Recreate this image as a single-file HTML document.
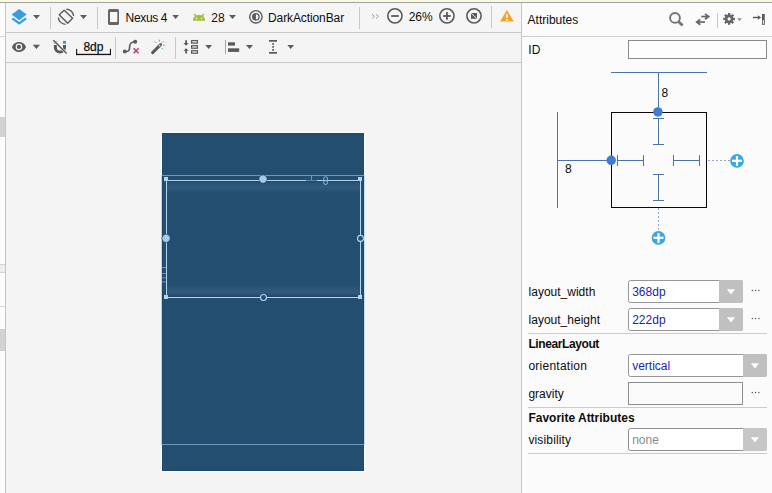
<!DOCTYPE html>
<html><head><meta charset="utf-8">
<style>
*{margin:0;padding:0;box-sizing:border-box}
html,body{width:772px;height:493px;overflow:hidden;background:#f4f4f4;font-family:"Liberation Sans",sans-serif;color:#1a1a1a}
.a{position:absolute}
.t{position:absolute;white-space:nowrap;font-size:12px;line-height:14px}
.sep{position:absolute;width:1px;background:#cdcdcd}
.hl{position:absolute;height:1px;background:#cacaca}
.arr{position:absolute;width:0;height:0;border-left:3.5px solid transparent;border-right:3.5px solid transparent;border-top:4px solid #555}
</style></head><body>
<!-- top strip -->
<div class="a" style="left:0;top:0;width:772px;height:2px;background:#f9f9e0"></div>
<div class="a" style="left:0;top:2px;width:772px;height:1px;background:#a2a2a2"></div>

<!-- left panel -->
<div class="a" style="left:0;top:3px;width:5px;height:490px;background:#fcfcfc"></div>
<div class="a" style="left:5px;top:3px;width:1px;height:490px;background:#c6c6c6"></div>
<div class="a" style="left:0;top:36px;width:5px;height:1px;background:#d6d6d6"></div>
<div class="a" style="left:0;top:117px;width:5px;height:20px;background:#d2d2d2"></div>
<div class="a" style="left:0;top:264px;width:5px;height:9px;background:#eeeeee;border-top:1px solid #d4d4d4;border-bottom:1px solid #d4d4d4"></div>
<div class="a" style="left:0;top:306px;width:5px;height:1px;background:#d6d6d6"></div>
<div class="a" style="left:0;top:329px;width:5px;height:22px;background:#d2d2d2"></div>

<!-- toolbar -->
<div class="a" style="left:6px;top:3px;width:515px;height:29px;background:#f5f5f5"></div>
<div class="a" style="left:6px;top:32px;width:515px;height:1px;background:#c9c9c9"></div>
<div class="a" style="left:6px;top:33px;width:515px;height:29px;background:#f4f4f4"></div>
<div class="a" style="left:6px;top:62px;width:515px;height:1px;background:#c9c9c9"></div>

<!-- canvas -->
<div class="a" style="left:6px;top:63px;width:515px;height:430px;background:#f4f4f4"></div>

<!-- right panel -->
<div class="a" style="left:521px;top:3px;width:1px;height:490px;background:#c6c6c6"></div>
<div class="a" style="left:522px;top:3px;width:250px;height:490px;background:#fbfbfb"></div>
<div class="a" style="left:522px;top:36px;width:250px;height:1px;background:#cfcfcf"></div>


<!-- device -->
<div class="a" style="left:161px;top:132px;width:204px;height:340px;background:#fafcfe"></div>
<div class="a" style="left:162px;top:133px;width:202px;height:338px;background:#234e70;border:1px solid #20486a"></div>
<div class="a" style="left:167px;top:181px;width:193px;height:12px;background:linear-gradient(#213f5c,#2a5172 12%,#2e5a7d 45%,#2b5678 75%,#234e70)"></div>
<div class="a" style="left:167px;top:285px;width:193px;height:12px;background:linear-gradient(#234e70,#2b5678 30%,#2f5b7e 65%,#27486a 92%,#213f5c)"></div>
<svg class="a" style="left:0;top:0" width="772" height="493" viewBox="0 0 772 493">
 <!-- linear layout outline -->
 <g fill="#6c98c0">
  <rect x="162" y="175" width="202" height="1"/>
  <rect x="162" y="444" width="202" height="1"/>
 </g>
 <rect x="161" y="175" width="1" height="270" fill="#b8d2ea"/>
 <rect x="364" y="175" width="1" height="270" fill="#c4dcf0"/>
 <!-- selection -->
 <g fill="#b2d4f0">
  <rect x="166" y="180" width="195" height="1"/>
  <rect x="166" y="297" width="195" height="1"/>
  <rect x="166" y="180" width="1" height="118"/>
  <rect x="360" y="180" width="1" height="118"/>
  <rect x="164" y="177" width="4" height="4"/>
  <rect x="358" y="177" width="4" height="4"/>
  <rect x="164" y="295" width="4" height="4"/>
  <rect x="358" y="295" width="4" height="4"/>
 </g>
 <!-- top tick and chain -->
 <rect x="306" y="180" width="11" height="1" fill="#5a86ab"/>
 <rect x="311" y="175" width="1" height="5" fill="#6c98c0"/>
 <g fill="none" stroke="#8fb6da" stroke-width="1">
  <rect x="323.6" y="176.8" width="4" height="4" rx="2"/>
  <rect x="323.6" y="180.5" width="4" height="4" rx="2"/>
 </g>
 <g fill="#6a94ba">
  <rect x="162" y="267" width="4" height="1"/>
  <rect x="162" y="273" width="4" height="1"/>
  <rect x="162" y="277.3" width="4" height="1"/>
  <rect x="162" y="281.5" width="4" height="1"/>
 </g>
 <g fill="none" stroke="#b2d4f0" stroke-width="1.1">
  <circle cx="263.5" cy="297.5" r="3.0" fill="#234e70"/>
  <circle cx="360.5" cy="238.4" r="3.0" fill="#234e70"/>
 </g>
 <g fill="#a9cae6" stroke="#1d4261" stroke-width="0.6">
  <path d="M263,174.8 L265.6,175.9 A4.1,4.1 0 1 1 260.4,175.9 Z"/>
  <path d="M161.8,238.3 L162.9,235.7 A4.1,4.1 0 1 1 162.9,240.9 Z"/>
 </g>
</svg>


<svg class="a" style="left:0;top:0" width="772" height="493" viewBox="0 0 772 493">
 <!-- ID box -->
 <rect x="628.5" y="40.5" width="138" height="18" fill="#fdfdfd" stroke="#8a8a8a" stroke-width="1"/>
 <!-- constraint widget -->
 <g fill="#4b74ad">
  <rect x="611" y="72" width="96" height="1"/>
  <rect x="658" y="72" width="1" height="40"/>
  <rect x="557" y="112" width="1" height="96"/>
  <rect x="557" y="160" width="54" height="1"/>
  <rect x="658" y="118" width="1" height="27"/>
  <rect x="653" y="118" width="11" height="1"/>
  <rect x="653" y="144" width="11" height="1"/>
  <rect x="658" y="174" width="1" height="27"/>
  <rect x="653" y="174" width="11" height="1"/>
  <rect x="653" y="200" width="11" height="1"/>
  <rect x="617" y="160" width="27" height="1"/>
  <rect x="617" y="155" width="1" height="11"/>
  <rect x="643" y="155" width="1" height="11"/>
  <rect x="673" y="160" width="27" height="1"/>
  <rect x="673" y="155" width="1" height="11"/>
  <rect x="699" y="155" width="1" height="11"/>
 </g>
 <rect x="611.5" y="112.5" width="95" height="95" fill="none" stroke="#0a0a0a" stroke-width="1"/>
 <g stroke="#98a6c0" stroke-width="1" stroke-dasharray="2,2" fill="none">
  <path d="M708,160.5 H730"/>
  <path d="M658.5,208 V231"/>
 </g>
 <circle cx="657.9" cy="111.9" r="4.75" fill="#3d7dd8"/>
 <circle cx="611.2" cy="160.3" r="4.75" fill="#3d7dd8"/>
 <g>
  <circle cx="737" cy="160.9" r="6.8" fill="#3aa6e4"/>
  <rect x="732" y="159.7" width="10" height="2.2" fill="#fff"/>
  <rect x="735.9" y="156.1" width="2.2" height="9.8" fill="#fff"/>
  <circle cx="658.5" cy="237.9" r="6.8" fill="#3aa6e4"/>
  <rect x="653.5" y="236.7" width="10" height="2.2" fill="#fff"/>
  <rect x="657.4" y="233.1" width="2.2" height="9.8" fill="#fff"/>
 </g>
 <g font-family="Liberation Sans" font-size="12" fill="#0a0a0a">
  <text x="661.6" y="96.9">8</text>
  <text x="564.9" y="173.1">8</text>
 </g>
 <!-- dropdowns -->
 <g>
<rect x="628.5" y="280.5" width="114" height="22" rx="2" fill="#fff" stroke="#969696"/><path d="M719,280 H741 Q743,280 743,282 V301 Q743,303 741,303 H719 Z" fill="#c0c0c0"/><polygon points="726.9,289.2 735.1,289.2 731.0,294.4" fill="#fff"/>
<rect x="628.5" y="308.5" width="114" height="22" rx="2" fill="#fff" stroke="#969696"/><path d="M719,308 H741 Q743,308 743,310 V329 Q743,331 741,331 H719 Z" fill="#c0c0c0"/><polygon points="726.9,317.2 735.1,317.2 731.0,322.4" fill="#fff"/>
<rect x="628.5" y="354.5" width="138" height="22" rx="2" fill="#fff" stroke="#969696"/><path d="M743,354 H765 Q767,354 767,356 V375 Q767,377 765,377 H743 Z" fill="#c0c0c0"/><polygon points="750.9,363.2 759.1,363.2 755.0,368.4" fill="#fff"/>
 <rect x="628.5" y="382.5" width="114" height="22" fill="#fbfbfb" stroke="#8f8f8f"/>
<rect x="628.5" y="428.5" width="138" height="22" rx="2" fill="#fff" stroke="#8e8e8e"/><path d="M743,428 H765 Q767,428 767,430 V449 Q767,451 765,451 H743 Z" fill="#c6c6c6"/><polygon points="750.9,437.2 759.1,437.2 755.0,442.4" fill="#fff"/>
 </g>
 <g fill="#444">
  <circle cx="752.3" cy="290.5" r="0.65"/>
  <circle cx="755.6" cy="290.5" r="0.65"/>
  <circle cx="758.9" cy="290.5" r="0.65"/>
  <circle cx="752.3" cy="318.5" r="0.65"/>
  <circle cx="755.6" cy="318.5" r="0.65"/>
  <circle cx="758.9" cy="318.5" r="0.65"/>
  <circle cx="752.3" cy="392.5" r="0.65"/>
  <circle cx="755.6" cy="392.5" r="0.65"/>
  <circle cx="758.9" cy="392.5" r="0.65"/>
 </g>
 <g fill="#cbcbcb">
  <rect x="528" y="333" width="239" height="1"/>
  <rect x="528" y="407" width="239" height="1"/>
  <rect x="528" y="453" width="239" height="1"/>
 </g>
 <g font-family="Liberation Sans" font-size="12" fill="#0e0e0e">
  <text x="528.3" y="53.6">ID</text>
  <text x="528.6" y="296">layout_width</text>
  <text x="528.6" y="324">layout_height</text>
  <text x="528.4" y="348" font-weight="bold" letter-spacing="-0.4">LinearLayout</text>
  <text x="528.4" y="370" letter-spacing="0.25">orientation</text>
  <text x="528.4" y="398">gravity</text>
  <text x="528.4" y="422" font-weight="bold">Favorite Attributes</text>
  <text x="528.4" y="444" letter-spacing="0.15">visibility</text>
 </g>
 <g font-family="Liberation Sans" font-size="12" fill="#2424a8">
  <text x="632.2" y="296">368dp</text>
  <text x="632.2" y="324">222dp</text>
  <text x="632.2" y="370">vertical</text>
 </g>
 <text x="632.2" y="444" font-family="Liberation Sans" font-size="12" fill="#8a8a8a">none</text>
</svg>

<div id="content"></div>

<svg class="a" style="left:0;top:0" width="772" height="63" viewBox="0 0 772 63">
 <g fill="#5a5a5a">
  <!-- layers -->
  <polygon points="11.7,14.6 19.2,9 26.6,14.6 19.2,20.2" fill="#389ce0"/>
  <polyline points="12.3,18.3 19.2,23.4 26.1,18.3" fill="none" stroke="#389ce0" stroke-width="2.3"/>
  <polygon points="33,15 40,15 36.5,19"/>
  <!-- rotate -->
  <polygon points="59.2,14.7 64.2,10.2 72.6,18.3 67.7,23.2" fill="none" stroke="#555" stroke-width="1.3" stroke-linejoin="round"/>
  <path d="M66.2,9.1 A7.7,7.7 0 0 1 73.6,15.8" fill="none" stroke="#555" stroke-width="1.3"/>
  <path d="M58.3,17.6 A7.7,7.7 0 0 0 65.7,24.4" fill="none" stroke="#555" stroke-width="1.3"/>
  <polygon points="80,15 87,15 83.5,19"/>
  <!-- phone -->
  <rect x="108" y="9" width="11" height="16" rx="1.6" fill="#666"/>
  <rect x="110" y="12" width="7.3" height="10" fill="#f8f8f8"/>
  <polygon points="172.3,15 178.9,15 175.6,18.9" fill="#5a5a5a"/>
  <!-- android -->
  <path d="M192.9,20.7 L193.2,18.6 Q194.4,15.1 199,15.1 Q203.6,15.1 204.8,18.6 L205.1,20.7 Z" fill="#9cc134"/>
  <path d="M194.2,14 L196.6,16.7 M203.8,14 L201.4,16.7" stroke="#9cc134" stroke-width="1.4"/>
  <circle cx="196.5" cy="18.4" r="0.85" fill="#e9f6b4"/><circle cx="201.5" cy="18.4" r="0.85" fill="#e9f6b4"/>
  <polygon points="229,15 236,15 232.5,19"/>
  <!-- theme -->
  <circle cx="255.9" cy="16.8" r="6.2" fill="none" stroke="#5a5a5a" stroke-width="1.4"/>
  <circle cx="255.9" cy="16.8" r="3.2" fill="none" stroke="#5a5a5a" stroke-width="1.3"/>
  <path d="M255.9,13.6 A3.2,3.2 0 0 0 255.9,20 Z" fill="#5a5a5a"/>
  <!-- >> -->
  <path d="M372.2,14.3 L374.4,16.4 L372.2,18.5 M376.2,14.3 L378.4,16.4 L376.2,18.5" fill="none" stroke="#8a8a8a" stroke-width="0.9"/>
  <!-- zoom out -->
  <circle cx="394.9" cy="15.9" r="7.1" fill="none" stroke="#5a5a5a" stroke-width="1.6"/>
  <rect x="391.1" y="15.1" width="7.7" height="1.8"/>
  <!-- zoom in -->
  <circle cx="446.9" cy="15.9" r="7.1" fill="none" stroke="#5a5a5a" stroke-width="1.6"/>
  <rect x="443.1" y="15.1" width="7.7" height="1.8"/>
  <rect x="446.05" y="12.1" width="1.8" height="7.7"/>
  <!-- fit -->
  <circle cx="474" cy="15.9" r="7.1" fill="none" stroke="#5a5a5a" stroke-width="1.6"/>
  <rect x="471" y="13" width="6" height="5.8"/>
  <line x1="471.2" y1="13.2" x2="476.8" y2="18.6" stroke="#f5f5f5" stroke-width="0.9"/>
  <!-- warning -->
  <polygon points="506.9,10.1 513.8,21.6 500.1,21.6" fill="#f2a328"/>
  <rect x="505.9" y="14.1" width="2" height="3.9" fill="#fff3c4"/>
  <rect x="505.9" y="19" width="2" height="1.7" fill="#fff3c4"/>
 </g>
 <!-- separators row1 -->
 <g fill="#c8c8c8">
  <rect x="50" y="7" width="1" height="22"/>
  <rect x="97" y="7" width="1" height="22"/>
  <rect x="359" y="7" width="1" height="22"/>
  <rect x="491" y="6" width="1" height="22"/>
 </g>
 <!-- row 2 -->
 <g fill="#5a5a5a">
  <!-- eye -->
  <path d="M11.9,46.9 C14.6,40.2 23.4,40.2 26.1,46.9 C23.4,53.6 14.6,53.6 11.9,46.9 Z" fill="#5a5a5a"/>
  <circle cx="18.95" cy="46.9" r="3.3" fill="#f4f4f4"/>
  <circle cx="18.95" cy="46.9" r="2.1" fill="#5a5a5a"/>
  <polygon points="32.8,44.7 40,44.7 36.4,49"/>
  <!-- magnet -->
  <path d="M53.85,45.1 V47.5 A6.07,6.07 0 0 0 66,47.5 V45.1 H63 V47.5 A3.07,3.07 0 0 1 56.85,47.5 V45.1 Z" fill="#585858"/>
  <rect x="63" y="40.9" width="3" height="2.8" fill="#3a95d0"/>
  <rect x="53.85" y="40.9" width="3" height="2.8" fill="#3a95d0"/>
  <line x1="53" y1="39.8" x2="67" y2="53.8" stroke="#f4f4f4" stroke-width="2.6"/>
  <line x1="53.4" y1="40.2" x2="66.6" y2="53.4" stroke="#555" stroke-width="1.4"/>
  <!-- 8dp bracket -->
  <rect x="76.1" y="53.8" width="34.9" height="1.3" fill="#111"/>
  <rect x="76.1" y="48.9" width="1.1" height="6.2" fill="#111"/>
  <rect x="109.9" y="48.9" width="1.1" height="6.2" fill="#111"/>
  <!-- clear constraints -->
  <path d="M124.8,51.6 C128.6,51.8 129.5,50.6 129.6,47 C129.7,43.2 131,41.8 135.2,41.8" fill="none" stroke="#5c5c5c" stroke-width="1.7"/>
  <circle cx="124.8" cy="51.6" r="2" fill="#5c5c5c"/>
  <circle cx="135.2" cy="41.8" r="2" fill="#5c5c5c"/>
  <path d="M133.6,48.2 L138.6,53.2 M138.6,48.2 L133.6,53.2" stroke="#c23c5c" stroke-width="1.5"/>
  <!-- wand -->
  <line x1="152.6" y1="52.6" x2="160.6" y2="44.6" stroke="#5a5a5a" stroke-width="2.9" stroke-linecap="round"/>
  <line x1="159" y1="46.2" x2="160.2" y2="45" stroke="#e6e6e6" stroke-width="1.2"/>
  <g stroke="#3b9cc6" stroke-width="1">
   <line x1="155" y1="41.6" x2="156.2" y2="42.8"/>
   <line x1="159.3" y1="39.8" x2="159.3" y2="41.5"/>
   <line x1="163.4" y1="41.3" x2="162.3" y2="42.4"/>
   <line x1="164.8" y1="45.3" x2="163.2" y2="45.3"/>
   <line x1="163.1" y1="49.3" x2="162" y2="48.2"/>
  </g>
  <!-- pack -->
  <path d="M185.2,40.2 H187 V42.9 H188.7 L186.1,45.7 L183.4,42.9 H185.2 Z"/>
  <path d="M186.1,48.2 L188.7,50.8 H187 V53.6 H185.2 V50.8 H183.4 Z"/>
  <rect x="191.6" y="40.6" width="5.8" height="2.5" fill="none" stroke="#5a5a5a" stroke-width="1.25"/>
  <rect x="191.6" y="45.7" width="5.8" height="2.5" fill="none" stroke="#5a5a5a" stroke-width="1.25"/>
  <rect x="191.6" y="50.7" width="5.8" height="2.5" fill="none" stroke="#5a5a5a" stroke-width="1.25"/>
  <polygon points="205.3,45 212,45 208.65,49"/>
  <!-- align -->
  <rect x="225" y="40" width="1" height="14" fill="#72b4e2"/>
  <rect x="228" y="42.3" width="7" height="3.3"/>
  <rect x="228" y="48.3" width="11.2" height="3.6"/>
  <polygon points="246,45 253,45 249.5,49"/>
  <!-- guidelines -->
  <rect x="269" y="40" width="8" height="1.7"/>
  <rect x="269" y="52" width="8" height="1.7"/>
  <rect x="272.2" y="43.2" width="1.8" height="1.6"/>
  <rect x="272.2" y="46.1" width="1.8" height="1.6"/>
  <rect x="272.2" y="49.1" width="1.8" height="1.7"/>
  <polygon points="287.4,45 294,45 290.7,49"/>
 </g>
 <g fill="#c8c8c8">
  <rect x="115" y="37" width="1" height="22"/>
  <rect x="175" y="37" width="1" height="22"/>
 </g>
 <!-- toolbar text -->
 <g font-family="Liberation Sans" font-size="12" fill="#0e0e0e">
  <text x="125.6" y="21.6" letter-spacing="-0.35">Nexus 4</text>
  <text x="211.3" y="21.9">28</text>
  <text x="268" y="21.6" letter-spacing="-0.1">DarkActionBar</text>
  <text x="408.7" y="21.2">26%</text>
  <text x="83.4" y="50.8" stroke="#1e1e1e" stroke-width="0.25">8dp</text>
 </g>
 <!-- attributes header -->
 <g fill="#666">
  <circle cx="675" cy="17.9" r="4.9" fill="none" stroke="#737373" stroke-width="1.9"/>
  <line x1="678.4" y1="21.4" x2="682.6" y2="25.6" stroke="#737373" stroke-width="2.8"/>
  <rect x="701.3" y="15.7" width="6.5" height="1.7"/>
  <polyline points="705,13.9 708.6,16.55 705,19.2" fill="none" stroke="#666" stroke-width="1.8"/>
  <rect x="698" y="21.2" width="7" height="1.7"/>
  <polyline points="700.3,19.4 696.8,22.05 700.3,24.7" fill="none" stroke="#666" stroke-width="1.8"/>
  <rect x="717" y="13" width="1" height="15" fill="#c8c8c8"/>
  <circle cx="729.1" cy="18.9" r="4.3"/>
  <rect x="727.95" y="13.00" width="2.3" height="3" transform="rotate(0 729.1 18.9)"/><rect x="727.95" y="13.00" width="2.3" height="3" transform="rotate(45 729.1 18.9)"/><rect x="727.95" y="13.00" width="2.3" height="3" transform="rotate(90 729.1 18.9)"/><rect x="727.95" y="13.00" width="2.3" height="3" transform="rotate(135 729.1 18.9)"/><rect x="727.95" y="13.00" width="2.3" height="3" transform="rotate(180 729.1 18.9)"/><rect x="727.95" y="13.00" width="2.3" height="3" transform="rotate(225 729.1 18.9)"/><rect x="727.95" y="13.00" width="2.3" height="3" transform="rotate(270 729.1 18.9)"/><rect x="727.95" y="13.00" width="2.3" height="3" transform="rotate(315 729.1 18.9)"/>
  <circle cx="729.1" cy="18.9" r="1.6" fill="#fbfbfb"/>
  <polygon points="737.2,18.3 741.8,18.3 739.5,21" fill="#8a8a8a"/>
  <rect x="752.9" y="16.8" width="5.5" height="1.4" fill="#555"/>
  <polygon points="757.9,15.3 761,17.5 757.9,19.7" fill="#555"/>
  <rect x="762" y="14" width="2.8" height="10.8" fill="#5a5a5a"/>
  <rect x="762.9" y="20.2" width="1" height="3.6" fill="#fbfbfb"/>
 </g>
 <g font-family="Liberation Sans" font-size="12" fill="#0e0e0e">
  <text x="527.6" y="24">Attributes</text>
 </g>
</svg>

</body></html>
